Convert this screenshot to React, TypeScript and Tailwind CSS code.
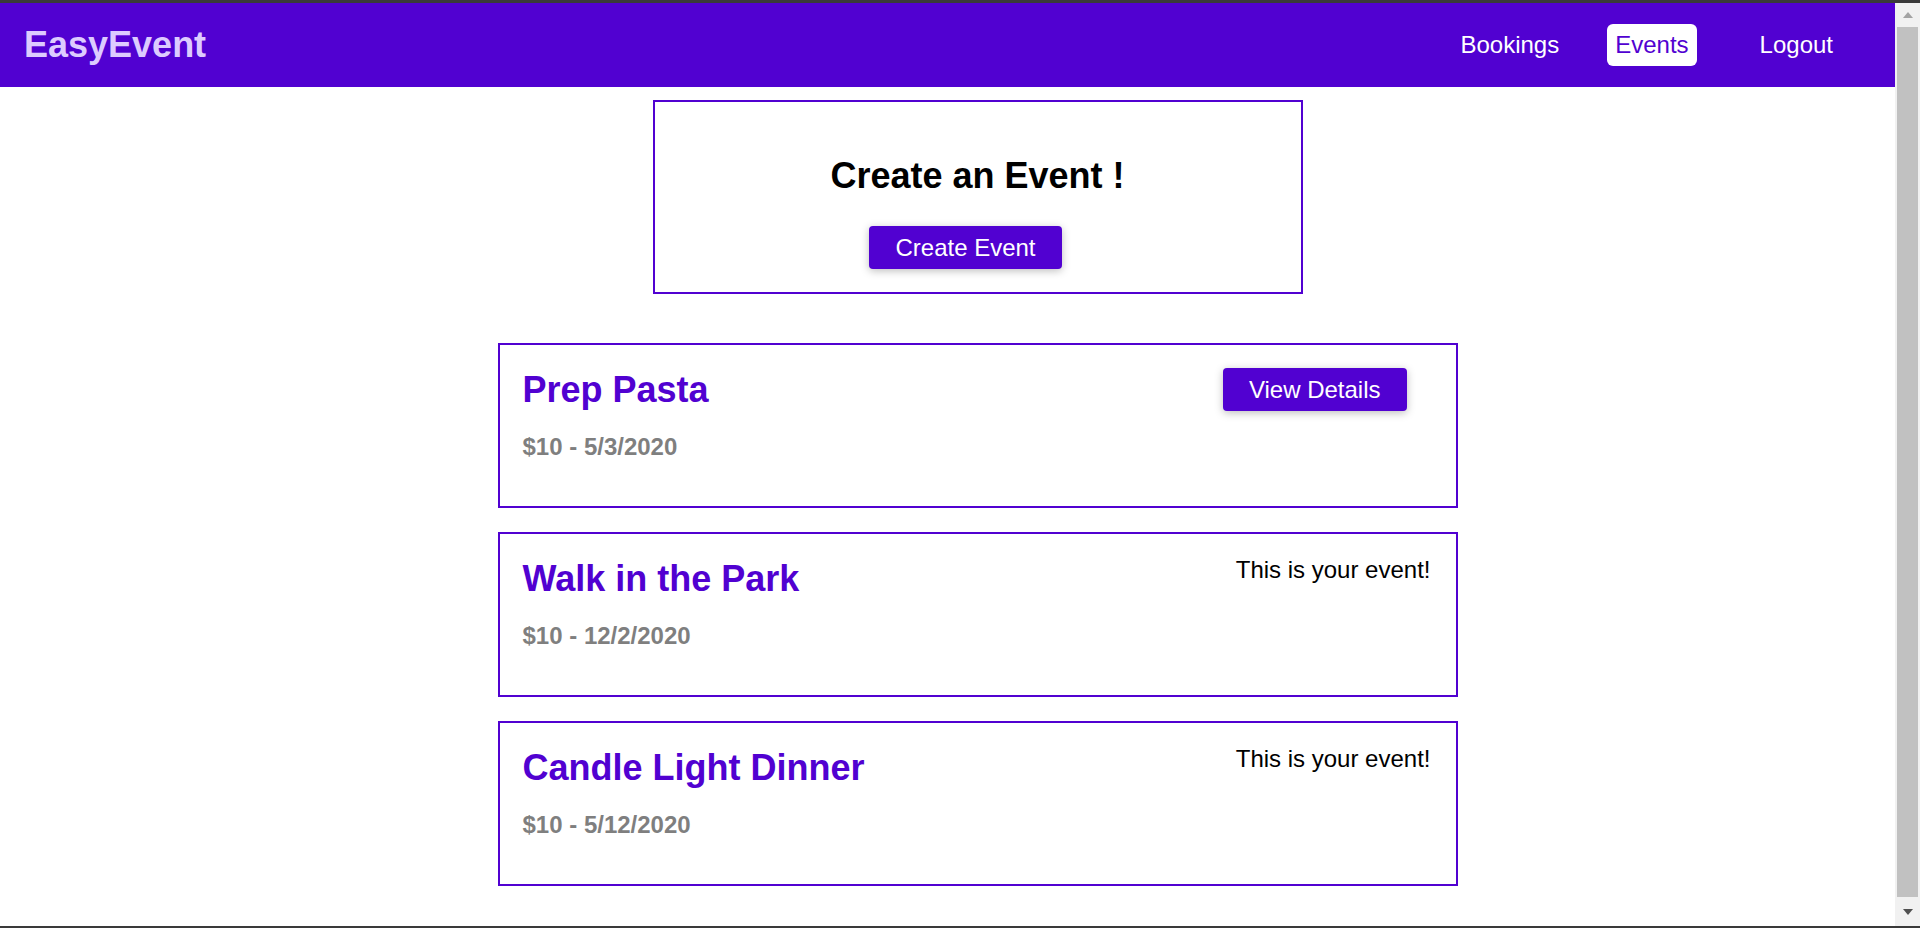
import React from "react";

const events = [
  { title: "Prep Pasta", price: "$10", date: "5/3/2020", own: false },
  { title: "Walk in the Park", price: "$10", date: "12/2/2020", own: true },
  { title: "Candle Light Dinner", price: "$10", date: "5/12/2020", own: true },
];

function Header() {
  return (
    <header className="h-[84px] bg-[#5101d1] flex items-center justify-between pl-[24px] pr-[54px]">
      <h1 className="text-[36px] font-bold text-[#ddcbff]">EasyEvent</h1>
      <nav className="flex items-center text-[24px] text-white">
        <a href="#" className="px-2">Bookings</a>
        <a href="#" className="ml-[40px] h-[42px] px-2 flex items-center bg-white text-[#5101d1] rounded-[6px]">
          Events
        </a>
        <a href="#" className="ml-[55px] px-2">Logout</a>
      </nav>
    </header>
  );
}

function EventItem({ title, price, date, own }: { title: string; price: string; date: string; own: boolean }) {
  return (
    <li className="w-[960px] h-[165px] border-2 border-[#5101d1] flex justify-between pl-[23px] pr-[25px] pt-[24px]">
      <div>
        <h1 className="text-[36px] leading-[41px] font-bold text-[#5101d1]">{title}</h1>
        <h2 className="mt-[23px] text-[24px] leading-[28px] font-bold text-[#7f7f7f]">
          {price} - {date}
        </h2>
      </div>
      <div>
        {own ? (
          <p className="text-[24px] leading-[24px] text-black">This is your event!</p>
        ) : (
          <button className="-mt-px mr-6 h-[43px] px-[26px] bg-[#5101d1] text-white text-[24px] rounded-[4px] shadow-[0_2px_8px_rgba(0,0,0,0.26)]">
            View Details
          </button>
        )}
      </div>
    </li>
  );
}

function Scrollbar() {
  return (
    <div className="w-[25px] bg-[#f1f1f1] flex flex-col">
      <div className="h-[24px] flex items-center justify-center">
        <svg width="10" height="6" viewBox="0 0 10 6">
          <polygon points="0,6 5,0 10,6" fill="#a3a3a3" />
        </svg>
      </div>
      <div className="flex-1 mx-[2px] bg-[#c1c1c1]" />
      <div className="h-[29px] flex items-center justify-center">
        <svg width="10" height="6" viewBox="0 0 10 6">
          <polygon points="0,0 10,0 5,6" fill="#505050" />
        </svg>
      </div>
    </div>
  );
}

export default function App() {
  return (
    <div className="h-[928px] w-full flex flex-col bg-white overflow-hidden font-['Liberation_Sans',Arial,sans-serif]">
      <div className="h-[3px] bg-[#3a3a3a]" />
      <div className="flex flex-1 min-h-0">
        <div className="flex-1 flex flex-col">
          <Header />
          <main className="flex flex-col items-center pl-[60px] pt-[13px]">
            {/* create box */}
            <div className="w-[650px] h-[194px] border-2 border-[#5101d1] flex flex-col items-center pt-[53px]">
              <h1 className="text-[36px] leading-[41px] font-bold text-black">Create an Event !</h1>
              <button className="mt-[30px] mr-6 h-[43px] px-[26px] bg-[#5101d1] text-white text-[24px] rounded-[4px] shadow-[0_2px_8px_rgba(0,0,0,0.26)]">
                Create Event
              </button>
            </div>

            <ul className="mt-[49px] flex flex-col gap-[24px]">
              {events.map((e) => (
                <EventItem key={e.title} {...e} />
              ))}
            </ul>
          </main>
        </div>
        <Scrollbar />
      </div>
      <div className="h-[2px] bg-[#3a3a3a]" />
    </div>
  );
}
